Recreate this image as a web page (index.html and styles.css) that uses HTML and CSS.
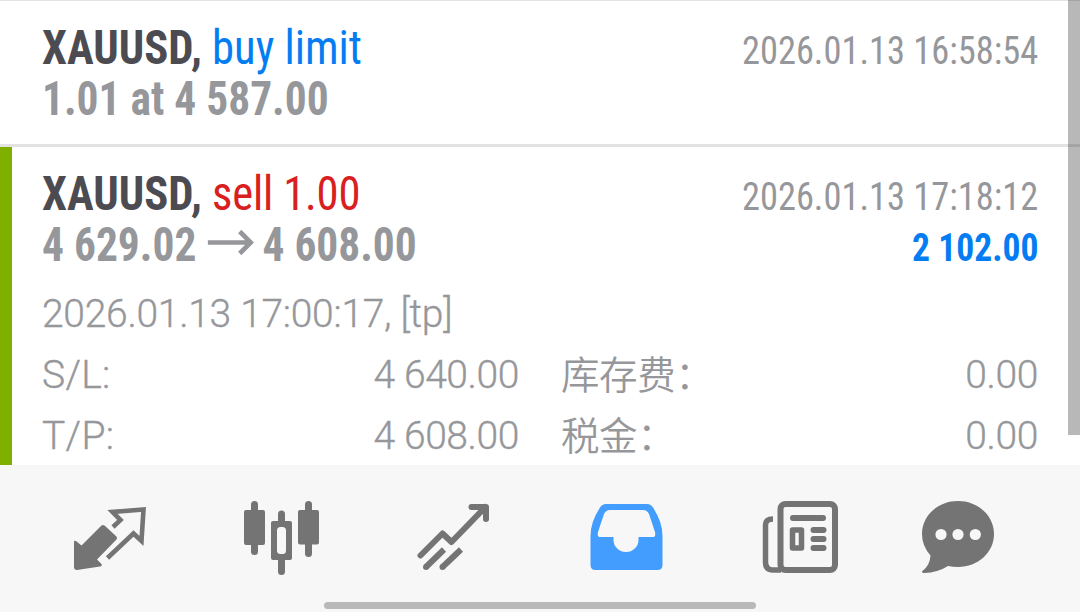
FILE: index.html
```html
<!DOCTYPE html>
<html lang="zh-CN">
<head>
    <meta charset="UTF-8">
    <title>History</title>
    <link rel="stylesheet" href="styles.css">
</head>
<body>
    <div class="screen">
        <main class="history">
            <section class="order">
                <div class="line">
                    <div class="title"><b>XAUUSD,</b> <span class="buy">buy limit</span></div>
                    <div class="time">2026.01.13 16:58:54</div>
                </div>
                <div class="line">
                    <div class="price">1.01 at 4 587.00</div>
                </div>
            </section>

            <section class="order order-tp">
                <div class="line">
                    <div class="title"><b>XAUUSD,</b> <span class="sell">sell 1.00</span></div>
                    <div class="time">2026.01.13 17:18:12</div>
                </div>
                <div class="line">
                    <div class="price">
                        <span>4 629.02</span>
                        <svg class="arrow" width="51" height="28" viewBox="0 0 46 28" preserveAspectRatio="none"><path d="M0 14.5H43M32 3.5L43 14.5L32 25.5" fill="none" stroke="currentColor" stroke-width="4.6"/></svg>
                        <span>4 608.00</span>
                    </div>
                    <div class="profit">2 102.00</div>
                </div>
                <div class="comment">2026.01.13 17:00:17, [tp]</div>
                <div class="details">
                    <div class="item"><span class="label">S/L:</span><span>4 640.00</span></div>
                    <div class="item"><span class="cjk">库存费：</span><span>0.00</span></div>
                    <div class="item"><span class="label">T/P:</span><span>4 608.00</span></div>
                    <div class="item"><span class="cjk">税金：</span><span>0.00</span></div>
                </div>
            </section>
            <div class="scrollbar"></div>
        </main>

        <nav class="tabs">
            <!-- quotes -->
            <svg class="tab" viewBox="0 0 100 95">
                <path d="M14 52Q14 50 16 51L21.5 55.5L41.5 35.5Q43 34.5 44.5 35.5L56.5 46.5Q57.5 48 56.5 49.5L37 69.5L41.5 74Q42.5 76 40 76.5L17 80Q14 80 14 77Z" fill="currentColor"/>
                <path d="M53 37L60.5 30L52.5 22L83.5 19.5L81.5 51L73.5 43.5L47.5 68" fill="none" stroke="currentColor" stroke-width="4.6"/>
            </svg>
            <!-- charts -->
            <svg class="tab" viewBox="0 0 100 95">
                <g fill="currentColor">
                    <rect x="21" y="11" width="7" height="54" rx="3.5"/>
                    <rect x="14" y="20" width="21" height="35" rx="2"/>
                    <rect x="48" y="20.5" width="7" height="64.5" rx="3.5"/>
                    <rect x="41" y="31" width="21" height="39" rx="2"/>
                    <rect x="75" y="11" width="7" height="56" rx="3.5"/>
                    <rect x="68" y="20" width="21" height="34.5" rx="2"/>
                </g>
                <rect x="47" y="37" width="9" height="27" rx="3.5" fill="#f7f7f7"/>
            </svg>
            <!-- trade -->
            <svg class="tab" viewBox="-5 0 100 95">
                <g fill="none" stroke="currentColor" stroke-width="6">
                    <path d="M15.5 65.5L37.5 43.5L46.500 52L80.5 17M66.500 17H81V29" stroke-linecap="round" stroke-linejoin="round" transform="translate(0 0)"/>
                    <path d="M21 77L39 59.500M37.5 77L56 59.500"/>
                </g>
                <g fill="currentColor"><circle cx="21" cy="77" r="3"/><circle cx="37.5" cy="77" r="3"/></g>
            </svg>
            <!-- history -->
            <svg class="tab tab-active" viewBox="-5 0 100 95">
                <path fill="currentColor" fill-rule="evenodd" d="M31 14H72Q76 14 78 17.5Q87.5 32 87.5 46V75Q87.5 80 82.5 80H20.5Q15.5 80 15.5 75V46Q15.5 32 25 17.5Q27 14 31 14ZM35 20Q31 20 29 24L23 42Q22 47 25 47H38.5V50A12.5 12 0 0 0 63.5 50V47H78Q81 47 80 42L74 24Q72 20 68 20Z"/>
            </svg>
            <!-- news -->
            <svg class="tab" viewBox="-10 0 100 95">
                <g fill="none" stroke="currentColor">
                    <rect x="30.5" y="14" width="54.5" height="66" rx="5" stroke-width="6"/>
                    <path d="M23 29Q15.5 29 15.5 35V72Q15.5 80 23 80H31" stroke-width="5.5"/>
                    <rect x="42.5" y="40" width="9" height="18" stroke-width="5.5" stroke-linejoin="round"/>
                    <path d="M43 28H73M63.5 40H73.5M63.5 49H73.5M63.5 58H73.5" stroke-width="6" stroke-linecap="round"/>
                </g>
            </svg>
            <!-- messages -->
            <svg class="tab" viewBox="2 0 100 95">
                <path fill="currentColor" d="M50 11C70 11 86 25.5 86 44C86 62.5 70 77 50 77Q45 77 40 76Q30 82.5 16 83Q12.5 82.5 15 80.5Q22 75 22.5 65.5Q14 56 14 44C14 25.5 30 11 50 11Z"/>
                <g fill="#f7f7f7"><circle cx="33" cy="44.5" r="5.6"/><circle cx="50" cy="44.5" r="5.6"/><circle cx="67.3" cy="44.5" r="5.6"/></g>
            </svg>
            <div class="home-bar"></div>
        </nav>
    </div>
</body>
</html>
```
FILE: styles.css
```css
body {
    margin: 0;
    background: #fff;
}

.screen {
    display: flex;
    flex-direction: column;
    width: 1080px;
    height: 612px;
    overflow: hidden;
    font-family: Roboto, "Noto Sans CJK SC", sans-serif;
    color: #96979b;
}

.history {
    position: relative;
    height: 465px;
    box-sizing: border-box;
    border-top: 1px solid #e3e3e3;
}

.order {
    padding: 21px 42px 20px;
    border-bottom: 3px solid #e3e3e3;
}

.order-tp {
    padding: 21px 42px 0 30px;
    border-left: 12px solid #7fb000;
    border-bottom: 0;
}

.line {
    display: flex;
    justify-content: space-between;
    height: 51px;
    line-height: 51px;
    font-family: "Roboto Condensed", Roboto, sans-serif;
    font-stretch: 75%;
    font-size: 48px;
    white-space: nowrap;
}

/* narrower than the condensed face */
.title {
    transform: scaleX(0.93);
    transform-origin: left;
}

.title b {
    color: #4c4b52;
}

.buy {
    color: #057df2;
}

.sell {
    color: #d9201f;
    letter-spacing: -0.2px;
}

.price {
    display: flex;
    font-weight: 700;
    transform: scaleX(0.905);
    transform-origin: left;
}

.arrow {
    margin: 9px 10px 0 12px;
}

.time,
.profit {
    font-size: 39px;
    line-height: 59px;
    transform: scaleX(0.934);
    transform-origin: right;
}

.profit {
    font-weight: 700;
    color: #057df2;
    margin-right: -1px;
    transform: scaleX(0.913);
}

.comment,
.details {
    font-size: 39px;
    font-weight: 300;
    -webkit-text-stroke: 0.35px currentColor;
}

.comment {
    margin-top: 14px;
    line-height: 61px;
    letter-spacing: -0.28px;
}

.details {
    display: grid;
    grid-template-columns: 477px 477px;
    column-gap: 42px;
    letter-spacing: -0.4px;
}

.item {
    display: flex;
    justify-content: space-between;
    height: 61px;
    line-height: 61px;
}

.label {
    letter-spacing: 0.3px;
}

.cjk {
    font-size: 38.5px;
    font-weight: 350;
    -webkit-text-stroke: 0;
}

/* overlay scroll thumb */
.scrollbar {
    position: absolute;
    top: -1px;
    right: 0;
    width: 12px;
    height: 435px;
    background: rgba(0, 0, 0, 0.28);
}

.tabs {
    position: relative;
    display: flex;
    gap: 70px;
    height: 147px;
    padding: 25px 0 0 60px;
    box-sizing: border-box;
    background: #f7f7f7;
}

.tab {
    width: 100px;
    height: 95px;
    flex: none;
    color: #747474;
}

.tab-active {
    color: #429dff;
}

.home-bar {
    position: absolute;
    left: 324px;
    bottom: 3px;
    width: 432px;
    height: 7px;
    border-radius: 4px;
    background: #b9b9b9;
}
```
